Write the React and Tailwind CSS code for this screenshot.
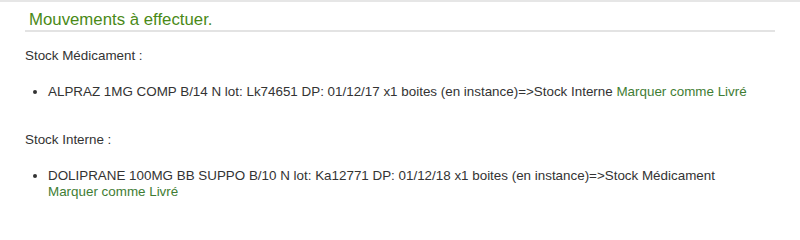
import React from "react";

export default function App() {
  return (
    <div className="w-[800px] h-[209px] bg-white border-t-2 border-[#e6e6e6] font-['Liberation_Sans',Arial,sans-serif] text-[13.4px] text-[#333]">
      <div className="pl-[25px] pr-[25px]">
        <h3 className="text-[16.8px] leading-[20px] text-[#4a8a17] pt-[8px] pb-0 border-b-2 border-[#e3e3e3] pl-[4px]">
          Mouvements à effectuer.
        </h3>
        <p className="mt-[16px] leading-[16px]">Stock Médicament :</p>
        <ul className="list-disc pl-[23px] mr-[18px] mt-[20px] leading-[16px]">
          <li>
            ALPRAZ 1MG COMP B/14 N lot: Lk74651 DP: 01/12/17 x1 boites (en instance)=&gt;Stock Interne{" "}
            <a href="#" className="text-[#3f7d34]">Marquer comme Livré</a>
          </li>
        </ul>
        <p className="mt-[32px] leading-[16px]">Stock Interne :</p>
        <ul className="list-disc pl-[23px] mr-[18px] mt-[20px] leading-[16px]">
          <li>
            DOLIPRANE 100MG BB SUPPO B/10 N lot: Ka12771 DP: 01/12/18 x1 boites (en instance)=&gt;Stock Médicament{" "}
            <a href="#" className="text-[#3f7d34]">Marquer comme Livré</a>
          </li>
        </ul>
      </div>
    </div>
  );
}
